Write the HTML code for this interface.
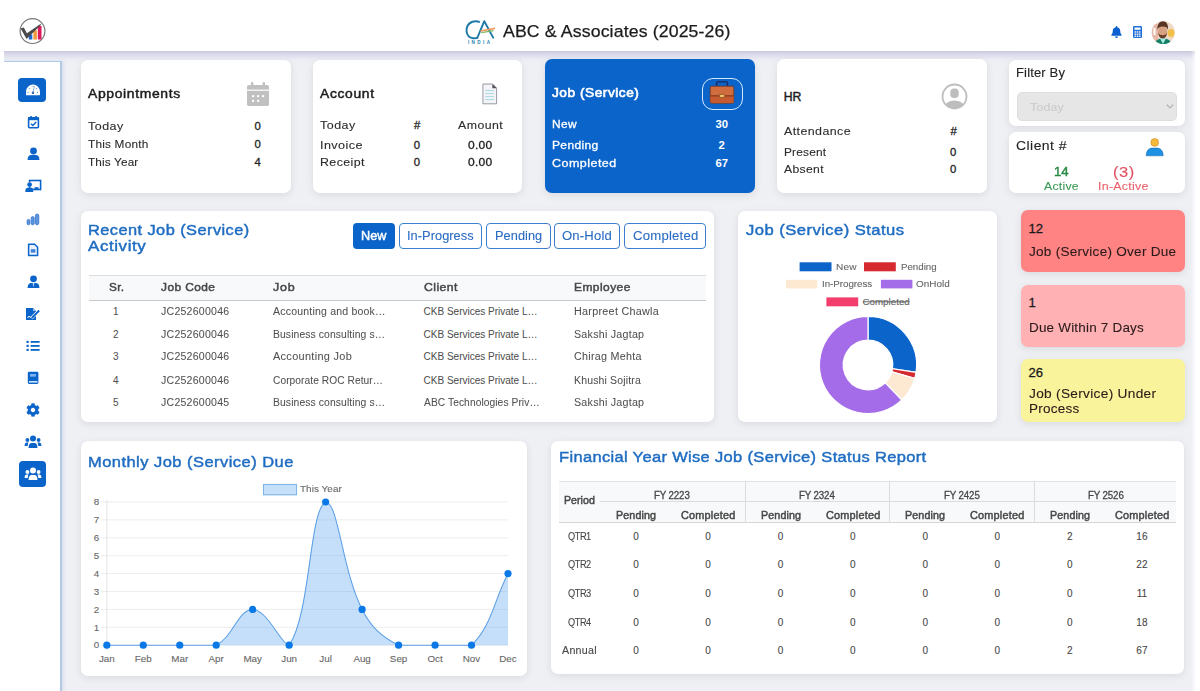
<!DOCTYPE html>
<html><head><meta charset="utf-8">
<style>
*{box-sizing:border-box;margin:0;padding:0}
html,body{width:1200px;height:691px;overflow:hidden;background:#fff;font-family:"Liberation Sans",sans-serif;color:#222}
.abs{position:absolute}
#main{position:absolute;left:61px;top:51px;width:1134px;height:640px;background:#eff0f4}
#hdr{position:absolute;left:0;top:0;width:1200px;height:51px;background:#fff}
#hshadow{position:absolute;left:4px;top:51px;width:1191px;height:11px;background:linear-gradient(#c9c8de,#dcdcec 35%,#ebecf4 75%,#eff0f4)}
#side{position:absolute;left:4px;top:61px;width:58px;height:630px;background:#fff;border-top:1.5px solid #b3cbea;border-right:2px solid #b2c8e4;box-shadow:2px 0 3px rgba(200,215,235,0.6)}
.card{position:absolute;background:#fff;border-radius:7px;box-shadow:0 2px 7px rgba(90,90,100,0.14)}
.t{position:absolute;white-space:nowrap;line-height:1;transform-origin:0 0}
#redge{position:absolute;left:1191px;top:51px;width:9px;height:640px;background:linear-gradient(90deg,rgba(255,255,255,0),#fff 70%)}

</style></head>
<body>
<div id="main"></div>
<div id="hdr"></div>
<div id="hshadow"></div>
<div id="side"></div>
<svg class="abs" style="left:17px;top:15px" width="32" height="32" viewBox="0 0 32 32">
  <circle cx="15.5" cy="16.1" r="12.4" fill="#fff" stroke="#777" stroke-width="1.2"/>
  <rect x="11.8" y="19.4" width="3.5" height="5.1" fill="#2467cc"/>
  <rect x="16.4" y="15.3" width="3.5" height="9.2" fill="#f59a3c"/>
  <rect x="20.8" y="10.9" width="3.7" height="13.6" fill="#dc1a5a"/>
  <path d="M3.6 13.6 L6.8 12.6 L9.9 18.2 L24.2 8.6 L23.6 10.2 L9.6 23.9 Z" fill="#4a4a4a"/>
</svg>
<svg class="abs" style="left:462px;top:17px" width="36" height="30" viewBox="462 17 36 30">
  <path d="M479.8 22.2 C477.5 21 474.5 20.8 471.8 22 C468 23.8 466.2 27.5 466.6 31.5 C467 35 469.5 37.6 473 38.2 C474.8 38.5 476.5 38.2 477.8 37.6" fill="none" stroke="#1f7aa8" stroke-width="2"/>
  <path d="M477 38.6 L484.3 21.2 L493.6 38.4" fill="none" stroke="#1f7aa8" stroke-width="1.9" stroke-linejoin="round"/>
  <path d="M480.5 31 L495 28.4" stroke="#f39a5c" stroke-width="1.6"/>
  <path d="M481.5 32.6 L493.5 30.6" stroke="#7dbb63" stroke-width="1.3"/>
  <text x="480.2" y="43.8" font-size="4.6" font-family="Liberation Sans" font-weight="bold" fill="#2a7fb0" text-anchor="middle" letter-spacing="2.4">INDIA</text>
</svg>
<svg class="abs" style="left:1111px;top:26px" width="11" height="12" viewBox="0 0 448 512"><path fill="#0b5fd0" d="M224 512c35 0 64-29 64-64H160c0 35 29 64 64 64zm215-150c-19-21-55-52-55-154 0-78-54-140-128-155V32c0-18-14-32-32-32s-32 14-32 32v21C118 68 64 130 64 208c0 102-36 133-55 154-6 6-9 14-9 22 0 16 13 32 32 32h384c19 0 32-16 32-32 0-8-3-16-9-22z"/></svg>
<svg class="abs" style="left:1133px;top:26px" width="9" height="12" viewBox="0 0 9 12"><rect x="0" y="0" width="9" height="12" rx="1.2" fill="#1f6fd8"/><rect x="1.5" y="1.5" width="6" height="2.3" fill="#fff"/><g fill="#fff"><rect x="1.5" y="5.3" width="1.6" height="1.3"/><rect x="3.7" y="5.3" width="1.6" height="1.3"/><rect x="5.9" y="5.3" width="1.6" height="1.3"/><rect x="1.5" y="7.5" width="1.6" height="1.3"/><rect x="3.7" y="7.5" width="1.6" height="1.3"/><rect x="5.9" y="7.5" width="1.6" height="1.3"/><rect x="1.5" y="9.6" width="1.6" height="1.3"/><rect x="3.7" y="9.6" width="1.6" height="1.3"/><rect x="5.9" y="9.6" width="1.6" height="1.3"/></g></svg>
<svg class="abs" style="left:1151px;top:20px" width="25" height="25" viewBox="0 0 25 25">
  <defs><clipPath id="av"><circle cx="12.3" cy="12.5" r="11.6"/></clipPath>
  <filter id="bl" x="-10%" y="-10%" width="120%" height="120%"><feGaussianBlur stdDeviation="0.45"/></filter></defs>
  <g clip-path="url(#av)"><g filter="url(#bl)">
    <rect width="25" height="25" fill="#efd9c8"/>
    <rect x="0" y="4" width="7" height="18" fill="#e7b7a8"/>
    <rect x="2.5" y="8" width="2" height="7" fill="#fff"/>
    <ellipse cx="20" cy="13" rx="3.5" ry="4" fill="#f0c04a"/>
    <path d="M3 25 C4 20 7.5 18.5 12 18.5 C16.5 18.5 20 20 21 25 Z" fill="#128066"/>
    <path d="M9 18.5 L12 24 L15 18.5 Z" fill="#a8ece6"/>
    <ellipse cx="11.6" cy="11.8" rx="4.6" ry="6" fill="#d6a283"/>
    <path d="M6.5 10 C6 4 8.5 1.2 11.8 1.2 C15.5 1.2 17.5 4 17 10 C16.2 7.2 14.5 6.5 11.8 6.5 C9.2 6.5 7.3 7.2 6.5 10 Z" fill="#5a3525"/>
    <path d="M7.2 12.5 C7.5 17 9.5 18.3 11.6 18.3 C13.8 18.3 15.8 17 16.1 12.5 C15.2 14.8 13.5 15.2 11.6 15.2 C9.8 15.2 8 14.8 7.2 12.5 Z" fill="#6a3b28"/>
  </g></g>
</svg>
<div class="abs" style="left:18px;top:78px;width:28px;height:24px;border-radius:4px;background:#0b64c9"></div>
<svg class="abs" style="left:25px;top:83px" width="16" height="13" viewBox="0 0 16 13">
 <path d="M1.6 12.2 C1.2 12.2 1 12 1 11.5 L1 8.6 A7 7 0 0 1 15 8.6 L15 11.5 C15 12 14.8 12.2 14.4 12.2 Z" fill="#fff"/>
 <g fill="#5a8fd6"><circle cx="4.3" cy="5.6" r="0.6"/><circle cx="3" cy="9.4" r="0.6"/><circle cx="12.5" cy="9.4" r="0.6"/><circle cx="11.4" cy="5.6" r="0.6"/><circle cx="8" cy="3.6" r="0.5"/></g>
 <circle cx="8" cy="9.8" r="1.2" fill="#1a4fa0"/>
 <path d="M8 9.8 L9.3 3.4" stroke="#7aa6e0" stroke-width="0.9"/>
</svg>
<svg class="abs" style="left:27px;top:115px" width="13" height="14" viewBox="0 0 13 14">
 <rect x="1.6" y="2.8" width="9.8" height="10" rx="1" fill="none" stroke="#0b64c9" stroke-width="1.6"/>
 <rect x="1" y="2.2" width="11" height="3" fill="#0b64c9"/>
 <rect x="3.2" y="1" width="1.6" height="2.5" fill="#0b64c9"/><rect x="8.2" y="1" width="1.6" height="2.5" fill="#0b64c9"/>
 <path d="M4 8.8 L5.8 10.5 L9.2 7" fill="none" stroke="#0b64c9" stroke-width="1.5"/>
</svg>
<svg class="abs" style="left:27px;top:147px" width="13" height="14" viewBox="0 0 13 14">
 <circle cx="6.5" cy="4" r="3.4" fill="#0b64c9"/>
 <path d="M0.6 13 C0.6 9 2.5 8 4.5 8 L8.5 8 C10.5 8 12.4 9 12.4 13 Z" fill="#0b64c9"/>
</svg>
<svg class="abs" style="left:25px;top:179px" width="17" height="14" viewBox="0 0 17 14">
 <rect x="4.6" y="1.5" width="11" height="9" fill="none" stroke="#0b64c9" stroke-width="1.6"/>
 <rect x="3" y="3" width="4" height="4.5" fill="#fff"/>
 <circle cx="4.6" cy="5.6" r="2.4" fill="#0b64c9"/>
 <path d="M0.3 13 C0.3 9.5 1.5 8.8 3 8.8 L6.5 8.8 C7.5 8.8 8.2 9.5 8.2 13 Z" fill="#0b64c9"/>
 <rect x="9.5" y="8.2" width="4" height="2.8" fill="#0b64c9"/>
</svg>
<svg class="abs" style="left:26px;top:213px" width="14" height="13" viewBox="0 0 14 13">
 <g fill="#5b93dc" stroke="#2b6ccc" stroke-width="0.7">
 <rect x="1.1" y="6.4" width="2.8" height="5.4" rx="1.4"/><rect x="5.2" y="3.6" width="3" height="8.2" rx="1.5"/>
 <rect x="9.4" y="1" width="3.4" height="10.8" rx="1.7"/></g>
</svg>
<svg class="abs" style="left:27px;top:243px" width="12" height="14" viewBox="0 0 12 14">
 <path d="M1.6 1.2 L7.6 1.2 L10.6 4.2 L10.6 12.6 L1.6 12.6 Z" fill="#eaf2ff" stroke="#0b64c9" stroke-width="1.5" stroke-linejoin="round"/>
 <rect x="3.8" y="6.2" width="4.6" height="3.4" fill="#3f7fd6"/>
</svg>
<svg class="abs" style="left:27px;top:275px" width="13" height="14" viewBox="0 0 13 14">
 <circle cx="6.5" cy="3.8" r="3.4" fill="#0b64c9"/>
 <path d="M0.6 13 C0.6 9 2.5 8 4.5 8 L8.5 8 C10.5 8 12.4 9 12.4 13 Z" fill="#0b64c9"/>
 <path d="M5.6 8 L6.5 12.5 L7.4 8 Z" fill="#bcd6ff"/>
</svg>
<svg class="abs" style="left:25px;top:307px" width="16" height="14" viewBox="0 0 16 14">
 <path d="M1 1 L8 1 L11 4 L11 13 L1 13 Z" fill="#0b64c9"/>
 <path d="M8 1 L8 4 L11 4" fill="#9cc2f2"/>
 <path d="M2.5 11 L4 9 L5 10.5 L6.5 9.5" fill="none" stroke="#fff" stroke-width="0.9"/>
 <path d="M6.5 11.2 L14.5 3.2" stroke="#fff" stroke-width="3.2"/>
 <path d="M6.8 11 L14.2 3.5" stroke="#0b64c9" stroke-width="1.8"/>
</svg>
<svg class="abs" style="left:26px;top:340px" width="14" height="12" viewBox="0 0 14 12">
 <g fill="#0b64c9"><rect x="0.5" y="0.8" width="2.2" height="2.2"/><rect x="0.5" y="4.8" width="2.2" height="2.2"/><rect x="0.5" y="8.8" width="2.2" height="2.2"/>
 <rect x="4.6" y="1" width="9" height="1.8"/><rect x="4.6" y="5" width="9" height="1.8"/><rect x="4.6" y="9" width="9" height="1.8"/></g>
</svg>
<svg class="abs" style="left:27px;top:371px" width="12" height="14" viewBox="0 0 12 14">
 <rect x="0.8" y="0.8" width="10.6" height="12.2" rx="1.4" fill="#0b64c9"/>
 <rect x="3" y="3" width="6" height="2.6" fill="#7fb2f5"/>
 <rect x="2" y="10" width="8.5" height="1.6" fill="#c8e6ff"/>
</svg>
<svg class="abs" style="left:26px;top:403px" width="14" height="14" viewBox="0 0 512 512">
 <path fill="#0b64c9" d="M487.4 315.7l-42.6-24.6c4.3-23.2 4.3-47 0-70.2l42.6-24.6c4.9-2.8 7.1-8.6 5.5-14-11.1-35.6-30-67.8-54.7-94.6-3.8-4.1-10-5.1-14.8-2.3L380.8 110c-17.9-15.4-38.5-27.3-60.8-35.1V25.8c0-5.6-3.9-10.5-9.4-11.7-36.7-8.2-74.3-7.8-109.2 0-5.5 1.2-9.4 6.1-9.4 11.7V75c-22.2 7.9-42.8 19.8-60.8 35.1L88.7 85.5c-4.9-2.8-11-1.9-14.8 2.3-24.7 26.7-43.6 58.9-54.7 94.6-1.7 5.4.6 11.2 5.5 14L67.3 221c-4.3 23.2-4.3 47 0 70.2l-42.6 24.6c-4.9 2.8-7.1 8.6-5.5 14 11.1 35.6 30 67.8 54.7 94.6 3.8 4.1 10 5.1 14.8 2.3l42.6-24.6c17.9 15.4 38.5 27.3 60.8 35.1v49.2c0 5.6 3.9 10.5 9.4 11.7 36.7 8.2 74.3 7.8 109.2 0 5.5-1.2 9.4-6.1 9.4-11.7v-49.2c22.2-7.9 42.8-19.8 60.8-35.1l42.6 24.6c4.9 2.8 11 1.9 14.8-2.3 24.7-26.7 43.6-58.9 54.7-94.6 1.5-5.5-.7-11.3-5.6-14.1zM256 336c-44.1 0-80-35.9-80-80s35.9-80 80-80 80 35.9 80 80-35.9 80-80 80z"/>
</svg>
<svg class="abs" style="left:24px;top:435px" width="18" height="14" viewBox="0 0 18 14">
 <g fill="#0b64c9"><circle cx="9" cy="3.6" r="3"/><circle cx="3.4" cy="5" r="1.9"/><circle cx="14.6" cy="5" r="1.9"/>
 <path d="M4.6 13 C4.6 9.2 6 8 8 8 L10 8 C12 8 13.4 9.2 13.4 13 Z"/>
 <path d="M0.6 11 C0.6 8.5 1.5 7.6 2.8 7.6 L4.5 7.6 C4 8.5 3.8 9.5 3.8 11 Z"/>
 <path d="M17.4 11 C17.4 8.5 16.5 7.6 15.2 7.6 L13.5 7.6 C14 8.5 14.2 9.5 14.2 11 Z"/></g>
</svg>
<div class="abs" style="left:19px;top:461px;width:27px;height:26px;border-radius:4px;background:#0b64c9"></div>
<svg class="abs" style="left:24px;top:467px" width="18" height="14" viewBox="0 0 18 14">
 <g fill="#fff"><circle cx="9" cy="3.6" r="3"/><circle cx="3.4" cy="5" r="1.9"/><circle cx="14.6" cy="5" r="1.9"/>
 <path d="M4.6 13 C4.6 9.2 6 8 8 8 L10 8 C12 8 13.4 9.2 13.4 13 Z"/>
 <path d="M0.6 11 C0.6 8.5 1.5 7.6 2.8 7.6 L4.5 7.6 C4 8.5 3.8 9.5 3.8 11 Z"/>
 <path d="M17.4 11 C17.4 8.5 16.5 7.6 15.2 7.6 L13.5 7.6 C14 8.5 14.2 9.5 14.2 11 Z"/></g>
</svg>
<div class="card" style="left:81px;top:60px;width:210px;height:133px"></div>
<div class="card" style="left:313px;top:60px;width:209px;height:133px"></div>
<div class="card" style="left:545px;top:59px;width:210px;height:134px;background:#0b64c9"></div>
<div class="card" style="left:777px;top:59px;width:210px;height:134px"></div>
<div class="card" style="left:1009px;top:60px;width:176px;height:66px"></div>
<div class="card" style="left:1009px;top:132px;width:176px;height:61px"></div>
<svg class="abs" style="left:246px;top:81px" width="24" height="26" viewBox="0 0 24 26">
 <rect x="1" y="4" width="22" height="21" rx="1.8" fill="#c0c0c0"/>
 <rect x="5" y="1" width="2.4" height="5" rx="1" fill="#c0c0c0"/><rect x="16.6" y="1" width="2.4" height="5" rx="1" fill="#c0c0c0"/>
 <rect x="1" y="8.6" width="22" height="1.2" fill="#fff"/>
 <g fill="#fff"><rect x="6" y="14.2" width="2.2" height="2"/><rect x="11" y="14.2" width="2.2" height="2"/><rect x="16" y="14.2" width="2.2" height="2"/>
 <rect x="6" y="18.8" width="2.2" height="2"/><rect x="11" y="18.8" width="2.2" height="2"/></g>
</svg>
<svg class="abs" style="left:482px;top:83px" width="16" height="22" viewBox="0 0 16 22">
 <path d="M0.9 1 L10.6 1 L14.6 5 L14.6 20.8 L0.9 20.8 Z" fill="#f3f4f8" stroke="#8e8e98" stroke-width="0.9"/>
 <path d="M10.4 0.9 L14.7 5.2 L10.4 5.2 Z" fill="#4d4d5a"/>
 <g stroke="#9fd6dc" stroke-width="0.9"><line x1="3.2" y1="7.6" x2="12" y2="7.6"/><line x1="3.2" y1="10.6" x2="12" y2="10.6"/><line x1="3.2" y1="13.6" x2="12" y2="13.6"/><line x1="3.2" y1="16.6" x2="12" y2="16.6"/></g>
</svg>
<div class="abs" style="left:702px;top:77.5px;width:40.5px;height:32.5px;border:1.3px solid #d2e8ff;border-radius:11px"></div>
<svg class="abs" style="left:709px;top:81px" width="26" height="23" viewBox="0 0 26 23">
 <path d="M7.6 5.5 L7.6 2.2 C7.6 1.3 8.2 0.8 9 0.8 L17 0.8 C17.8 0.8 18.4 1.3 18.4 2.2 L18.4 5.5" fill="none" stroke="#1b2f6a" stroke-width="1.5"/>
 <rect x="1.2" y="5.2" width="23.6" height="17" rx="1.6" fill="#cf6d3e" stroke="#7a3318" stroke-width="0.8"/>
 <rect x="1.6" y="15" width="22.8" height="6.8" fill="#c65a30"/>
 <rect x="1.6" y="14.2" width="22.8" height="1.3" fill="#8a3a1e"/>
 <rect x="10.3" y="13.4" width="5.4" height="3" rx="1" fill="#f3c36a" stroke="#6a3418" stroke-width="0.6"/>
</svg>
<svg class="abs" style="left:941px;top:83px" width="27" height="27" viewBox="0 0 27 27">
 <defs><clipPath id="hrc"><circle cx="13.5" cy="13.5" r="11.6"/></clipPath></defs>
 <circle cx="13.5" cy="13.5" r="12" fill="none" stroke="#bdbdbd" stroke-width="1.8"/>
 <g clip-path="url(#hrc)" fill="#bdbdbd"><rect x="9.3" y="5.5" width="8.4" height="9.5" rx="3.8"/><ellipse cx="13.5" cy="24" rx="10" ry="6.5"/></g>
</svg>
<div class="abs" style="left:1016.5px;top:92px;width:160.5px;height:28.8px;background:#e6e6e6;border:1px solid #dedede;border-radius:5px"></div>
<svg class="abs" style="left:1164.5px;top:103px" width="10" height="7" viewBox="0 0 10 7"><path d="M1.8 1.6 L5 4.8 L8.2 1.6" fill="none" stroke="#b0b0b0" stroke-width="1.2"/></svg>
<svg class="abs" style="left:1145px;top:137px" width="19" height="20" viewBox="0 0 19 20">
 <circle cx="9.7" cy="5.4" r="3.9" fill="#f7b93a" stroke="#c8892a" stroke-width="0.6"/>
 <path d="M1.2 18.8 C1.2 13.6 4 11.1 7.4 11.1 L12 11.1 C15.4 11.1 18.2 13.6 18.2 18.8 Z" fill="#1d92e2" stroke="#1a5fa8" stroke-width="0.5"/>
</svg>
<div class="card" style="left:81px;top:211px;width:633px;height:211px"></div>
<div class="card" style="left:738px;top:211px;width:259px;height:211px"></div>
<div class="card" style="left:1021px;top:210px;width:164px;height:62px;background:#ff8383"></div>
<div class="card" style="left:1021px;top:285px;width:164px;height:62px;background:#ffb1b4"></div>
<div class="card" style="left:1021px;top:359px;width:164px;height:63px;background:#f9f39c"></div>
<div class="abs" style="left:352.7px;top:223px;width:42.1px;height:26px;border-radius:4px;background:#0b64c9"></div>
<div class="abs" style="left:399.2px;top:223px;width:82.7px;height:26px;border-radius:4px;border:1px solid #3d7fcf;background:#fff"></div>
<div class="abs" style="left:486.3px;top:223px;width:64.3px;height:26px;border-radius:4px;border:1px solid #3d7fcf;background:#fff"></div>
<div class="abs" style="left:554.4px;top:223px;width:65.2px;height:26px;border-radius:4px;border:1px solid #3d7fcf;background:#fff"></div>
<div class="abs" style="left:624px;top:223px;width:82.4px;height:26px;border-radius:4px;border:1px solid #3d7fcf;background:#fff"></div>
<div class="abs" style="left:88.8px;top:275px;width:617.6px;height:26px;background:#f8f9fb;border-top:1px solid #dddddd;border-bottom:1px solid #c9c9c9"></div>
<svg class="abs" style="left:738px;top:250px" width="259" height="170" viewBox="738 250 259 170">
 <rect x="799.6" y="262.3" width="31.9" height="9" fill="#0b64c9"/>
 <rect x="864" y="262.3" width="31.8" height="9" fill="#d42a30"/>
 <rect x="786" y="279.8" width="31.2" height="8.6" fill="#fde9d1"/>
 <rect x="880.9" y="279.8" width="31.5" height="8.6" fill="#a56cea"/>
 <rect x="826.4" y="297.4" width="31.8" height="8.9" fill="#f23d6d"/>
 <line x1="863" y1="301.8" x2="909.5" y2="301.8" stroke="#666" stroke-width="1"/>
 <path d="M868.00 316.40 A48.6 48.6 0 0 1 916.04 372.35 L892.51 368.75 A24.8 24.8 0 0 0 868.00 340.20 Z" fill="#0b64c9" stroke="#fff" stroke-width="1.2"/><path d="M916.04 372.35 A48.6 48.6 0 0 1 914.72 378.40 L891.84 371.84 A24.8 24.8 0 0 0 892.51 368.75 Z" fill="#d42a30" stroke="#fff" stroke-width="1.2"/><path d="M914.72 378.40 A48.6 48.6 0 0 1 901.76 399.96 L885.23 382.84 A24.8 24.8 0 0 0 891.84 371.84 Z" fill="#fde9d1" stroke="#fff" stroke-width="1.2"/><path d="M901.76 399.96 A48.6 48.6 0 1 1 868.00 316.40 L868.00 340.20 A24.8 24.8 0 1 0 885.23 382.84 Z" fill="#a56cea" stroke="#fff" stroke-width="1.2"/>
</svg>
<div class="card" style="left:81px;top:441px;width:446px;height:235px"></div>
<div class="card" style="left:551px;top:441px;width:633px;height:233px"></div>
<svg class="abs" style="left:81px;top:441px" width="446" height="235" viewBox="81 441 446 235">
 <line x1="101" y1="645.20" x2="508" y2="645.20" stroke="#ededed" stroke-width="1"/><line x1="101" y1="627.30" x2="508" y2="627.30" stroke="#ededed" stroke-width="1"/><line x1="101" y1="609.40" x2="508" y2="609.40" stroke="#ededed" stroke-width="1"/><line x1="101" y1="591.50" x2="508" y2="591.50" stroke="#ededed" stroke-width="1"/><line x1="101" y1="573.60" x2="508" y2="573.60" stroke="#ededed" stroke-width="1"/><line x1="101" y1="555.70" x2="508" y2="555.70" stroke="#ededed" stroke-width="1"/><line x1="101" y1="537.80" x2="508" y2="537.80" stroke="#ededed" stroke-width="1"/><line x1="101" y1="519.90" x2="508" y2="519.90" stroke="#ededed" stroke-width="1"/><line x1="101" y1="502.00" x2="508" y2="502.00" stroke="#ededed" stroke-width="1"/>
 <line x1="106.8" y1="500" x2="106.8" y2="650" stroke="#e4e4e4" stroke-width="1"/>
 <rect x="263.5" y="484.5" width="33" height="10.3" fill="#c6e0fa" stroke="#7fb3ea" stroke-width="1.1"/>
 <path d="M106.80 645.20 C121.39 645.20 128.68 645.20 143.27 645.20 C157.86 645.20 165.16 645.20 179.75 645.20 C194.34 645.20 204.07 645.20 216.22 645.20 C233.25 636.84 238.10 609.40 252.69 609.40 C267.28 609.40 281.67 645.20 289.17 645.20 C310.85 613.28 309.13 510.10 325.64 502.00 C338.31 502.00 342.00 569.91 362.11 609.40 C371.17 627.19 381.56 636.84 398.58 645.20 C410.74 645.20 420.47 645.20 435.06 645.20 C449.65 645.20 462.42 645.20 471.53 645.20 C491.60 625.50 493.41 602.24 508.00 573.60 L508.00 645.2 L106.80 645.2 Z" fill="rgb(95,165,240)" fill-opacity="0.36"/>
 <path d="M106.80 645.20 C121.39 645.20 128.68 645.20 143.27 645.20 C157.86 645.20 165.16 645.20 179.75 645.20 C194.34 645.20 204.07 645.20 216.22 645.20 C233.25 636.84 238.10 609.40 252.69 609.40 C267.28 609.40 281.67 645.20 289.17 645.20 C310.85 613.28 309.13 510.10 325.64 502.00 C338.31 502.00 342.00 569.91 362.11 609.40 C371.17 627.19 381.56 636.84 398.58 645.20 C410.74 645.20 420.47 645.20 435.06 645.20 C449.65 645.20 462.42 645.20 471.53 645.20 C491.60 625.50 493.41 602.24 508.00 573.60" fill="none" stroke="#5b9fe6" stroke-width="1.05"/>
 <circle cx="106.80" cy="645.20" r="3.6" fill="#0a78e6"/><circle cx="143.27" cy="645.20" r="3.6" fill="#0a78e6"/><circle cx="179.75" cy="645.20" r="3.6" fill="#0a78e6"/><circle cx="216.22" cy="645.20" r="3.6" fill="#0a78e6"/><circle cx="252.69" cy="609.40" r="3.6" fill="#0a78e6"/><circle cx="289.17" cy="645.20" r="3.6" fill="#0a78e6"/><circle cx="325.64" cy="502.00" r="3.6" fill="#0a78e6"/><circle cx="362.11" cy="609.40" r="3.6" fill="#0a78e6"/><circle cx="398.58" cy="645.20" r="3.6" fill="#0a78e6"/><circle cx="435.06" cy="645.20" r="3.6" fill="#0a78e6"/><circle cx="471.53" cy="645.20" r="3.6" fill="#0a78e6"/><circle cx="508.00" cy="573.60" r="3.6" fill="#0a78e6"/>
</svg>
<div class="abs" style="left:559.2px;top:481px;width:617.2px;height:42px;background:#f8f9fb;border-top:1px solid #e2e2e2;border-bottom:1px solid #d6d6d6"></div>
<div class="abs" style="left:600px;top:501px;width:576.4px;height:1px;background:#dcdcdc"></div>
<div class="abs" style="left:744.6px;top:481px;width:1px;height:42px;background:#dcdcdc"></div>
<div class="abs" style="left:889.2px;top:481px;width:1px;height:42px;background:#dcdcdc"></div>
<div class="abs" style="left:1033.8px;top:481px;width:1px;height:42px;background:#dcdcdc"></div>
<div class="t" style="left:502.96px;top:22.93px;font-size:17.33px;color:#1b1b1b;letter-spacing:0.122px;transform:scaleX(1.0214);-webkit-text-stroke:0.25px currentColor">ABC &amp; Associates (2025-26)</div>
<div class="t" style="left:87.87px;top:88.47px;font-size:12.2px;color:#1d1d1d;letter-spacing:0.555px;transform:scaleX(1.1423);-webkit-text-stroke:0.45px currentColor">Appointments</div>
<div class="t" style="left:88.02px;top:121.20px;font-size:11.34px;color:#2b2b2b;letter-spacing:0.451px;transform:scaleX(1.1017);-webkit-text-stroke:0.1px currentColor">Today</div>
<div class="t" style="left:254.54px;top:121.20px;font-size:11.34px;color:#1d1d1d;-webkit-text-stroke:0.3px currentColor">0</div>
<div class="t" style="left:88.02px;top:139.10px;font-size:11.34px;color:#2b2b2b;letter-spacing:0.177px;transform:scaleX(1.0453);-webkit-text-stroke:0.1px currentColor">This Month</div>
<div class="t" style="left:254.54px;top:139.10px;font-size:11.34px;color:#1d1d1d;-webkit-text-stroke:0.3px currentColor">0</div>
<div class="t" style="left:88.02px;top:156.70px;font-size:11.34px;color:#2b2b2b;letter-spacing:0.143px;transform:scaleX(1.0385);-webkit-text-stroke:0.1px currentColor">This Year</div>
<div class="t" style="left:254.54px;top:156.70px;font-size:11.34px;color:#1d1d1d;-webkit-text-stroke:0.3px currentColor">4</div>
<div class="t" style="left:320.02px;top:87.87px;font-size:12.2px;color:#1d1d1d;letter-spacing:0.576px;transform:scaleX(1.1369);-webkit-text-stroke:0.45px currentColor">Account</div>
<div class="t" style="left:320.07px;top:119.65px;font-size:11.34px;color:#2b2b2b;letter-spacing:0.451px;transform:scaleX(1.1017);-webkit-text-stroke:0.1px currentColor">Today</div>
<div class="t" style="left:414.04px;top:119.65px;font-size:11.34px;color:#1d1d1d;-webkit-text-stroke:0.3px currentColor">#</div>
<div class="t" style="left:458.32px;top:119.65px;font-size:11.34px;color:#2b2b2b;letter-spacing:0.416px;transform:scaleX(1.0890);-webkit-text-stroke:0.1px currentColor">Amount</div>
<div class="t" style="left:320.07px;top:139.80px;font-size:11.34px;color:#2b2b2b;letter-spacing:0.390px;transform:scaleX(1.1114);-webkit-text-stroke:0.1px currentColor">Invoice</div>
<div class="t" style="left:413.84px;top:139.80px;font-size:11.34px;color:#1d1d1d;-webkit-text-stroke:0.3px currentColor">0</div>
<div class="t" style="left:468.47px;top:139.80px;font-size:11.34px;color:#1d1d1d;letter-spacing:0.270px;transform:scaleX(1.0608);-webkit-text-stroke:0.3px currentColor">0.00</div>
<div class="t" style="left:320.07px;top:157.30px;font-size:11.34px;color:#2b2b2b;letter-spacing:0.364px;transform:scaleX(1.0957);-webkit-text-stroke:0.1px currentColor">Receipt</div>
<div class="t" style="left:413.84px;top:157.30px;font-size:11.34px;color:#1d1d1d;-webkit-text-stroke:0.3px currentColor">0</div>
<div class="t" style="left:468.47px;top:157.30px;font-size:11.34px;color:#1d1d1d;letter-spacing:0.270px;transform:scaleX(1.0608);-webkit-text-stroke:0.3px currentColor">0.00</div>
<div class="t" style="left:551.67px;top:86.76px;font-size:12.1px;color:#ffffff;letter-spacing:0.457px;transform:scaleX(1.1325);-webkit-text-stroke:0.6px currentColor">Job (Service)</div>
<div class="t" style="left:551.72px;top:119.40px;font-size:11.34px;color:#ffffff;letter-spacing:0.349px;transform:scaleX(1.0506);-webkit-text-stroke:0.3px currentColor">New</div>
<div class="t" style="left:715.40px;top:119.40px;font-size:11.34px;color:#ffffff;font-weight:700">30</div>
<div class="t" style="left:551.72px;top:140.00px;font-size:11.34px;color:#ffffff;letter-spacing:0.283px;transform:scaleX(1.0668);-webkit-text-stroke:0.3px currentColor">Pending</div>
<div class="t" style="left:718.54px;top:140.00px;font-size:11.34px;color:#ffffff;font-weight:700">2</div>
<div class="t" style="left:551.72px;top:158.40px;font-size:11.34px;color:#ffffff;letter-spacing:0.422px;transform:scaleX(1.1037);-webkit-text-stroke:0.3px currentColor">Completed</div>
<div class="t" style="left:715.40px;top:158.40px;font-size:11.34px;color:#ffffff;font-weight:700">67</div>
<div class="t" style="left:783.67px;top:90.67px;font-size:12.2px;color:#1d1d1d;letter-spacing:-0.013px;-webkit-text-stroke:0.45px currentColor">HR</div>
<div class="t" style="left:783.72px;top:126.40px;font-size:11.34px;color:#2b2b2b;letter-spacing:0.372px;transform:scaleX(1.0976);-webkit-text-stroke:0.1px currentColor">Attendance</div>
<div class="t" style="left:950.44px;top:126.40px;font-size:11.34px;color:#1d1d1d;-webkit-text-stroke:0.3px currentColor">#</div>
<div class="t" style="left:783.72px;top:147.40px;font-size:11.34px;color:#2b2b2b;letter-spacing:0.195px;transform:scaleX(1.0481);-webkit-text-stroke:0.1px currentColor">Present</div>
<div class="t" style="left:950.04px;top:147.40px;font-size:11.34px;color:#1d1d1d;-webkit-text-stroke:0.3px currentColor">0</div>
<div class="t" style="left:783.72px;top:164.40px;font-size:11.34px;color:#2b2b2b;letter-spacing:0.315px;transform:scaleX(1.0738);-webkit-text-stroke:0.1px currentColor">Absent</div>
<div class="t" style="left:950.04px;top:164.40px;font-size:11.34px;color:#1d1d1d;-webkit-text-stroke:0.3px currentColor">0</div>
<div class="t" style="left:1015.84px;top:67.13px;font-size:12.6px;color:#222;letter-spacing:0.131px;transform:scaleX(1.0361);-webkit-text-stroke:0.1px currentColor">Filter By</div>
<div class="t" style="left:1030.29px;top:100.74px;font-size:11.77px;color:#c9c9c9;letter-spacing:0.223px;transform:scaleX(1.0460);-webkit-text-stroke:0.1px currentColor">Today</div>
<div class="t" style="left:1015.84px;top:140.13px;font-size:12.6px;color:#222;letter-spacing:0.396px;transform:scaleX(1.1109);-webkit-text-stroke:0.1px currentColor">Client #</div>
<div class="t" style="left:1054.42px;top:165.46px;font-size:13.4px;color:#2a8a45;letter-spacing:-0.136px;transform:scaleX(0.9855);-webkit-text-stroke:0.45px currentColor">14</div>
<div class="t" style="left:1044.26px;top:180.71px;font-size:11.56px;color:#3a9a55;letter-spacing:0.239px;transform:scaleX(1.0623);-webkit-text-stroke:0.1px currentColor">Active</div>
<div class="t" style="left:1112.84px;top:164.32px;font-size:14.98px;color:#e05060;letter-spacing:0.527px;transform:scaleX(1.1018);-webkit-text-stroke:0.1px currentColor">(3)</div>
<div class="t" style="left:1097.95px;top:180.71px;font-size:11.56px;color:#e8606a;letter-spacing:0.256px;transform:scaleX(1.0750);-webkit-text-stroke:0.1px currentColor">In-Active</div>
<div class="t" style="left:87.90px;top:222.10px;font-size:15.0px;color:#1f6dc2;letter-spacing:0.406px;transform:scaleX(1.0909);-webkit-text-stroke:0.45px currentColor">Recent Job (Service)</div>
<div class="t" style="left:87.90px;top:238.20px;font-size:15.0px;color:#1f6dc2;letter-spacing:0.510px;transform:scaleX(1.1306);-webkit-text-stroke:0.45px currentColor">Activity</div>
<div class="t" style="left:361.04px;top:229.61px;font-size:12.63px;color:#fff;letter-spacing:0.029px;transform:scaleX(1.0036);-webkit-text-stroke:0.45px currentColor">New</div>
<div class="t" style="left:407.24px;top:229.61px;font-size:12.63px;color:#2a6cc4;letter-spacing:0.053px;transform:scaleX(1.0126);-webkit-text-stroke:0.1px currentColor">In-Progress</div>
<div class="t" style="left:494.84px;top:229.61px;font-size:12.63px;color:#2a6cc4;letter-spacing:0.057px;transform:scaleX(1.0115);-webkit-text-stroke:0.1px currentColor">Pending</div>
<div class="t" style="left:562.08px;top:229.61px;font-size:12.63px;color:#2a6cc4;letter-spacing:0.180px;transform:scaleX(1.0364);-webkit-text-stroke:0.1px currentColor">On-Hold</div>
<div class="t" style="left:632.52px;top:229.61px;font-size:12.63px;color:#2a6cc4;letter-spacing:0.204px;transform:scaleX(1.0424);-webkit-text-stroke:0.1px currentColor">Completed</div>
<div class="t" style="left:108.75px;top:281.67px;font-size:10.9px;color:#474747;letter-spacing:0.305px;transform:scaleX(1.0792);-webkit-text-stroke:0.45px currentColor">Sr.</div>
<div class="t" style="left:161.35px;top:281.67px;font-size:10.9px;color:#474747;letter-spacing:0.378px;transform:scaleX(1.0950);-webkit-text-stroke:0.45px currentColor">Job Code</div>
<div class="t" style="left:273.35px;top:281.67px;font-size:10.9px;color:#474747;letter-spacing:0.701px;transform:scaleX(1.1441);-webkit-text-stroke:0.45px currentColor">Job</div>
<div class="t" style="left:423.55px;top:281.67px;font-size:10.9px;color:#474747;letter-spacing:0.394px;transform:scaleX(1.1230);-webkit-text-stroke:0.45px currentColor">Client</div>
<div class="t" style="left:573.65px;top:281.67px;font-size:10.9px;color:#474747;letter-spacing:0.407px;transform:scaleX(1.0988);-webkit-text-stroke:0.45px currentColor">Employee</div>
<div class="t" style="left:112.97px;top:307.04px;font-size:10.0px;color:#505050;-webkit-text-stroke:0.05px currentColor">1</div>
<div class="t" style="left:161.00px;top:307.04px;font-size:10.0px;color:#505050;letter-spacing:0.220px;transform:scaleX(1.0568);-webkit-text-stroke:0.05px currentColor">JC252600046</div>
<div class="t" style="left:273.40px;top:307.04px;font-size:10.0px;color:#505050;letter-spacing:0.182px;transform:scaleX(1.0532);-webkit-text-stroke:0.05px currentColor">Accounting and book…</div>
<div class="t" style="left:423.60px;top:307.04px;font-size:10.0px;color:#505050;-webkit-text-stroke:0.05px currentColor">CKB Services Private L…</div>
<div class="t" style="left:574.00px;top:307.04px;font-size:10.0px;color:#505050;letter-spacing:0.256px;transform:scaleX(1.0780);-webkit-text-stroke:0.05px currentColor">Harpreet Chawla</div>
<div class="t" style="left:112.97px;top:329.84px;font-size:10.0px;color:#505050;-webkit-text-stroke:0.05px currentColor">2</div>
<div class="t" style="left:161.00px;top:329.84px;font-size:10.0px;color:#505050;letter-spacing:0.220px;transform:scaleX(1.0568);-webkit-text-stroke:0.05px currentColor">JC252600046</div>
<div class="t" style="left:273.40px;top:329.84px;font-size:10.0px;color:#505050;letter-spacing:0.107px;transform:scaleX(1.0332);-webkit-text-stroke:0.05px currentColor">Business consulting s…</div>
<div class="t" style="left:423.60px;top:329.84px;font-size:10.0px;color:#505050;-webkit-text-stroke:0.05px currentColor">CKB Services Private L…</div>
<div class="t" style="left:574.00px;top:329.84px;font-size:10.0px;color:#505050;letter-spacing:0.224px;transform:scaleX(1.0694);-webkit-text-stroke:0.05px currentColor">Sakshi Jagtap</div>
<div class="t" style="left:112.97px;top:352.34px;font-size:10.0px;color:#505050;-webkit-text-stroke:0.05px currentColor">3</div>
<div class="t" style="left:161.00px;top:352.34px;font-size:10.0px;color:#505050;letter-spacing:0.220px;transform:scaleX(1.0568);-webkit-text-stroke:0.05px currentColor">JC252600046</div>
<div class="t" style="left:273.40px;top:352.34px;font-size:10.0px;color:#505050;letter-spacing:0.291px;transform:scaleX(1.0915);-webkit-text-stroke:0.05px currentColor">Accounting Job</div>
<div class="t" style="left:423.60px;top:352.34px;font-size:10.0px;color:#505050;-webkit-text-stroke:0.05px currentColor">CKB Services Private L…</div>
<div class="t" style="left:574.00px;top:352.34px;font-size:10.0px;color:#505050;letter-spacing:0.249px;transform:scaleX(1.0746);-webkit-text-stroke:0.05px currentColor">Chirag Mehta</div>
<div class="t" style="left:112.97px;top:375.54px;font-size:10.0px;color:#505050;-webkit-text-stroke:0.05px currentColor">4</div>
<div class="t" style="left:161.00px;top:375.54px;font-size:10.0px;color:#505050;letter-spacing:0.220px;transform:scaleX(1.0568);-webkit-text-stroke:0.05px currentColor">JC252600046</div>
<div class="t" style="left:273.40px;top:375.54px;font-size:10.0px;color:#505050;letter-spacing:0.066px;transform:scaleX(1.0181);-webkit-text-stroke:0.05px currentColor">Corporate ROC Retur…</div>
<div class="t" style="left:423.60px;top:375.54px;font-size:10.0px;color:#505050;-webkit-text-stroke:0.05px currentColor">CKB Services Private L…</div>
<div class="t" style="left:574.00px;top:375.54px;font-size:10.0px;color:#505050;letter-spacing:0.147px;transform:scaleX(1.0492);-webkit-text-stroke:0.05px currentColor">Khushi Sojitra</div>
<div class="t" style="left:112.97px;top:397.84px;font-size:10.0px;color:#505050;-webkit-text-stroke:0.05px currentColor">5</div>
<div class="t" style="left:161.00px;top:397.84px;font-size:10.0px;color:#505050;letter-spacing:0.220px;transform:scaleX(1.0568);-webkit-text-stroke:0.05px currentColor">JC252600045</div>
<div class="t" style="left:273.40px;top:397.84px;font-size:10.0px;color:#505050;letter-spacing:0.107px;transform:scaleX(1.0332);-webkit-text-stroke:0.05px currentColor">Business consulting s…</div>
<div class="t" style="left:423.60px;top:397.84px;font-size:10.0px;color:#505050;letter-spacing:0.076px;transform:scaleX(1.0220);-webkit-text-stroke:0.05px currentColor">ABC Technologies Priv…</div>
<div class="t" style="left:574.00px;top:397.84px;font-size:10.0px;color:#505050;letter-spacing:0.224px;transform:scaleX(1.0694);-webkit-text-stroke:0.05px currentColor">Sakshi Jagtap</div>
<div class="t" style="left:746.09px;top:222.13px;font-size:15.2px;color:#1f6dc2;letter-spacing:0.409px;transform:scaleX(1.0941);-webkit-text-stroke:0.45px currentColor">Job (Service) Status</div>
<div class="t" style="left:835.71px;top:262.00px;font-size:9.8px;color:#666666;letter-spacing:0.170px;transform:scaleX(1.0279);-webkit-text-stroke:0.1px currentColor">New</div>
<div class="t" style="left:900.61px;top:262.00px;font-size:9.8px;color:#666666;letter-spacing:-0.026px;transform:scaleX(0.9934);-webkit-text-stroke:0.1px currentColor">Pending</div>
<div class="t" style="left:822.01px;top:279.40px;font-size:9.8px;color:#666666;letter-spacing:-0.018px;transform:scaleX(0.9945);-webkit-text-stroke:0.1px currentColor">In-Progress</div>
<div class="t" style="left:916.41px;top:279.40px;font-size:9.8px;color:#666666;letter-spacing:0.045px;transform:scaleX(1.0105);-webkit-text-stroke:0.1px currentColor">OnHold</div>
<div class="t" style="left:862.41px;top:297.10px;font-size:9.8px;color:#666666;-webkit-text-stroke:0.1px currentColor">Completed</div>
<div class="t" style="left:1028.62px;top:222.15px;font-size:13.05px;color:#1a1a1a;-webkit-text-stroke:0.3px currentColor">12</div>
<div class="t" style="left:1028.63px;top:246.13px;font-size:12.84px;color:#2a1a1a;letter-spacing:0.234px;transform:scaleX(1.0586);-webkit-text-stroke:0.1px currentColor">Job (Service) Over Due</div>
<div class="t" style="left:1028.62px;top:296.25px;font-size:13.05px;color:#1a1a1a;-webkit-text-stroke:0.3px currentColor">1</div>
<div class="t" style="left:1028.63px;top:321.83px;font-size:12.84px;color:#2a1a1a;letter-spacing:0.203px;transform:scaleX(1.0484);-webkit-text-stroke:0.1px currentColor">Due Within 7 Days</div>
<div class="t" style="left:1028.62px;top:366.15px;font-size:13.05px;color:#1a1a1a;-webkit-text-stroke:0.3px currentColor">26</div>
<div class="t" style="left:1028.63px;top:388.13px;font-size:12.84px;color:#2a1a1a;letter-spacing:0.269px;transform:scaleX(1.0687);-webkit-text-stroke:0.1px currentColor">Job (Service) Under</div>
<div class="t" style="left:1028.63px;top:403.13px;font-size:12.84px;color:#2a1a1a;letter-spacing:0.252px;transform:scaleX(1.0527);-webkit-text-stroke:0.1px currentColor">Process</div>
<div class="t" style="left:87.90px;top:454.20px;font-size:15.0px;color:#1f6dc2;letter-spacing:0.432px;transform:scaleX(1.0973);-webkit-text-stroke:0.45px currentColor">Monthly Job (Service) Due</div>
<div class="t" style="left:299.71px;top:484.20px;font-size:9.8px;color:#666666;letter-spacing:0.046px;transform:scaleX(1.0138);-webkit-text-stroke:0.1px currentColor">This Year</div>
<div class="t" style="left:93.73px;top:640.40px;font-size:9.8px;color:#666666;-webkit-text-stroke:0.1px currentColor">0</div>
<div class="t" style="left:93.73px;top:622.50px;font-size:9.8px;color:#666666;-webkit-text-stroke:0.1px currentColor">1</div>
<div class="t" style="left:93.73px;top:604.60px;font-size:9.8px;color:#666666;-webkit-text-stroke:0.1px currentColor">2</div>
<div class="t" style="left:93.73px;top:586.70px;font-size:9.8px;color:#666666;-webkit-text-stroke:0.1px currentColor">3</div>
<div class="t" style="left:93.73px;top:568.80px;font-size:9.8px;color:#666666;-webkit-text-stroke:0.1px currentColor">4</div>
<div class="t" style="left:93.73px;top:550.90px;font-size:9.8px;color:#666666;-webkit-text-stroke:0.1px currentColor">5</div>
<div class="t" style="left:93.73px;top:533.00px;font-size:9.8px;color:#666666;-webkit-text-stroke:0.1px currentColor">6</div>
<div class="t" style="left:93.73px;top:515.10px;font-size:9.8px;color:#666666;-webkit-text-stroke:0.1px currentColor">7</div>
<div class="t" style="left:93.73px;top:497.20px;font-size:9.8px;color:#666666;-webkit-text-stroke:0.1px currentColor">8</div>
<div class="t" style="left:98.90px;top:654.00px;font-size:9.8px;color:#666666;-webkit-text-stroke:0.1px currentColor">Jan</div>
<div class="t" style="left:134.83px;top:654.00px;font-size:9.8px;color:#666666;-webkit-text-stroke:0.1px currentColor">Feb</div>
<div class="t" style="left:171.31px;top:654.00px;font-size:9.8px;color:#666666;-webkit-text-stroke:0.1px currentColor">Mar</div>
<div class="t" style="left:208.59px;top:654.00px;font-size:9.8px;color:#666666;-webkit-text-stroke:0.1px currentColor">Apr</div>
<div class="t" style="left:243.43px;top:654.00px;font-size:9.8px;color:#666666;-webkit-text-stroke:0.1px currentColor">May</div>
<div class="t" style="left:281.27px;top:654.00px;font-size:9.8px;color:#666666;-webkit-text-stroke:0.1px currentColor">Jun</div>
<div class="t" style="left:319.37px;top:654.00px;font-size:9.8px;color:#666666;-webkit-text-stroke:0.1px currentColor">Jul</div>
<div class="t" style="left:353.39px;top:654.00px;font-size:9.8px;color:#666666;-webkit-text-stroke:0.1px currentColor">Aug</div>
<div class="t" style="left:389.87px;top:654.00px;font-size:9.8px;color:#666666;-webkit-text-stroke:0.1px currentColor">Sep</div>
<div class="t" style="left:427.43px;top:654.00px;font-size:9.8px;color:#666666;-webkit-text-stroke:0.1px currentColor">Oct</div>
<div class="t" style="left:462.81px;top:654.00px;font-size:9.8px;color:#666666;-webkit-text-stroke:0.1px currentColor">Nov</div>
<div class="t" style="left:499.28px;top:654.00px;font-size:9.8px;color:#666666;-webkit-text-stroke:0.1px currentColor">Dec</div>
<div class="t" style="left:558.68px;top:448.96px;font-size:15.4px;color:#1f6dc2;letter-spacing:0.313px;transform:scaleX(1.0707);-webkit-text-stroke:0.45px currentColor">Financial Year Wise Job (Service) Status Report</div>
<div class="t" style="left:563.56px;top:495.03px;font-size:10.6px;color:#474747;letter-spacing:0.018px;transform:scaleX(1.0045);-webkit-text-stroke:0.45px currentColor">Period</div>
<div class="t" style="left:654.41px;top:490.84px;font-size:10px;color:#474747;letter-spacing:-0.125px;transform:scaleX(0.9703);-webkit-text-stroke:0.3px currentColor">FY 2223</div>
<div class="t" style="left:615.97px;top:510.50px;font-size:10.4px;color:#474747;letter-spacing:0.122px;transform:scaleX(1.0304);-webkit-text-stroke:0.45px currentColor">Pending</div>
<div class="t" style="left:680.96px;top:510.50px;font-size:10.4px;color:#474747;letter-spacing:0.190px;transform:scaleX(1.0483);-webkit-text-stroke:0.45px currentColor">Completed</div>
<div class="t" style="left:799.01px;top:490.84px;font-size:10px;color:#474747;letter-spacing:-0.125px;transform:scaleX(0.9703);-webkit-text-stroke:0.3px currentColor">FY 2324</div>
<div class="t" style="left:760.57px;top:510.50px;font-size:10.4px;color:#474747;letter-spacing:0.122px;transform:scaleX(1.0304);-webkit-text-stroke:0.45px currentColor">Pending</div>
<div class="t" style="left:825.56px;top:510.50px;font-size:10.4px;color:#474747;letter-spacing:0.190px;transform:scaleX(1.0483);-webkit-text-stroke:0.45px currentColor">Completed</div>
<div class="t" style="left:943.61px;top:490.84px;font-size:10px;color:#474747;letter-spacing:-0.125px;transform:scaleX(0.9703);-webkit-text-stroke:0.3px currentColor">FY 2425</div>
<div class="t" style="left:905.17px;top:510.50px;font-size:10.4px;color:#474747;letter-spacing:0.122px;transform:scaleX(1.0304);-webkit-text-stroke:0.45px currentColor">Pending</div>
<div class="t" style="left:970.16px;top:510.50px;font-size:10.4px;color:#474747;letter-spacing:0.190px;transform:scaleX(1.0483);-webkit-text-stroke:0.45px currentColor">Completed</div>
<div class="t" style="left:1088.21px;top:490.84px;font-size:10px;color:#474747;letter-spacing:-0.125px;transform:scaleX(0.9703);-webkit-text-stroke:0.3px currentColor">FY 2526</div>
<div class="t" style="left:1049.77px;top:510.50px;font-size:10.4px;color:#474747;letter-spacing:0.122px;transform:scaleX(1.0304);-webkit-text-stroke:0.45px currentColor">Pending</div>
<div class="t" style="left:1114.76px;top:510.50px;font-size:10.4px;color:#474747;letter-spacing:0.190px;transform:scaleX(1.0483);-webkit-text-stroke:0.45px currentColor">Completed</div>
<div class="t" style="left:567.68px;top:531.74px;font-size:10px;color:#474747;letter-spacing:-0.488px;transform:scaleX(0.9218);-webkit-text-stroke:0.1px currentColor">QTR1</div>
<div class="t" style="left:633.22px;top:531.74px;font-size:10px;color:#474747;-webkit-text-stroke:0.1px currentColor">0</div>
<div class="t" style="left:705.32px;top:531.74px;font-size:10px;color:#474747;-webkit-text-stroke:0.1px currentColor">0</div>
<div class="t" style="left:777.82px;top:531.74px;font-size:10px;color:#474747;-webkit-text-stroke:0.1px currentColor">0</div>
<div class="t" style="left:849.92px;top:531.74px;font-size:10px;color:#474747;-webkit-text-stroke:0.1px currentColor">0</div>
<div class="t" style="left:922.42px;top:531.74px;font-size:10px;color:#474747;-webkit-text-stroke:0.1px currentColor">0</div>
<div class="t" style="left:994.52px;top:531.74px;font-size:10px;color:#474747;-webkit-text-stroke:0.1px currentColor">0</div>
<div class="t" style="left:1067.02px;top:531.74px;font-size:10px;color:#474747;-webkit-text-stroke:0.1px currentColor">2</div>
<div class="t" style="left:1136.34px;top:531.74px;font-size:10px;color:#474747;-webkit-text-stroke:0.1px currentColor">16</div>
<div class="t" style="left:567.68px;top:560.24px;font-size:10px;color:#474747;letter-spacing:-0.488px;transform:scaleX(0.9218);-webkit-text-stroke:0.1px currentColor">QTR2</div>
<div class="t" style="left:633.22px;top:560.24px;font-size:10px;color:#474747;-webkit-text-stroke:0.1px currentColor">0</div>
<div class="t" style="left:705.32px;top:560.24px;font-size:10px;color:#474747;-webkit-text-stroke:0.1px currentColor">0</div>
<div class="t" style="left:777.82px;top:560.24px;font-size:10px;color:#474747;-webkit-text-stroke:0.1px currentColor">0</div>
<div class="t" style="left:849.92px;top:560.24px;font-size:10px;color:#474747;-webkit-text-stroke:0.1px currentColor">0</div>
<div class="t" style="left:922.42px;top:560.24px;font-size:10px;color:#474747;-webkit-text-stroke:0.1px currentColor">0</div>
<div class="t" style="left:994.52px;top:560.24px;font-size:10px;color:#474747;-webkit-text-stroke:0.1px currentColor">0</div>
<div class="t" style="left:1067.02px;top:560.24px;font-size:10px;color:#474747;-webkit-text-stroke:0.1px currentColor">0</div>
<div class="t" style="left:1136.34px;top:560.24px;font-size:10px;color:#474747;-webkit-text-stroke:0.1px currentColor">22</div>
<div class="t" style="left:567.68px;top:588.53px;font-size:10px;color:#474747;letter-spacing:-0.488px;transform:scaleX(0.9218);-webkit-text-stroke:0.1px currentColor">QTR3</div>
<div class="t" style="left:633.22px;top:588.53px;font-size:10px;color:#474747;-webkit-text-stroke:0.1px currentColor">0</div>
<div class="t" style="left:705.32px;top:588.53px;font-size:10px;color:#474747;-webkit-text-stroke:0.1px currentColor">0</div>
<div class="t" style="left:777.82px;top:588.53px;font-size:10px;color:#474747;-webkit-text-stroke:0.1px currentColor">0</div>
<div class="t" style="left:849.92px;top:588.53px;font-size:10px;color:#474747;-webkit-text-stroke:0.1px currentColor">0</div>
<div class="t" style="left:922.42px;top:588.53px;font-size:10px;color:#474747;-webkit-text-stroke:0.1px currentColor">0</div>
<div class="t" style="left:994.52px;top:588.53px;font-size:10px;color:#474747;-webkit-text-stroke:0.1px currentColor">0</div>
<div class="t" style="left:1067.02px;top:588.53px;font-size:10px;color:#474747;-webkit-text-stroke:0.1px currentColor">0</div>
<div class="t" style="left:1136.70px;top:588.53px;font-size:10px;color:#474747;-webkit-text-stroke:0.1px currentColor">11</div>
<div class="t" style="left:567.68px;top:617.83px;font-size:10px;color:#474747;letter-spacing:-0.488px;transform:scaleX(0.9218);-webkit-text-stroke:0.1px currentColor">QTR4</div>
<div class="t" style="left:633.22px;top:617.83px;font-size:10px;color:#474747;-webkit-text-stroke:0.1px currentColor">0</div>
<div class="t" style="left:705.32px;top:617.83px;font-size:10px;color:#474747;-webkit-text-stroke:0.1px currentColor">0</div>
<div class="t" style="left:777.82px;top:617.83px;font-size:10px;color:#474747;-webkit-text-stroke:0.1px currentColor">0</div>
<div class="t" style="left:849.92px;top:617.83px;font-size:10px;color:#474747;-webkit-text-stroke:0.1px currentColor">0</div>
<div class="t" style="left:922.42px;top:617.83px;font-size:10px;color:#474747;-webkit-text-stroke:0.1px currentColor">0</div>
<div class="t" style="left:994.52px;top:617.83px;font-size:10px;color:#474747;-webkit-text-stroke:0.1px currentColor">0</div>
<div class="t" style="left:1067.02px;top:617.83px;font-size:10px;color:#474747;-webkit-text-stroke:0.1px currentColor">0</div>
<div class="t" style="left:1136.34px;top:617.83px;font-size:10px;color:#474747;-webkit-text-stroke:0.1px currentColor">18</div>
<div class="t" style="left:561.97px;top:646.24px;font-size:10px;color:#474747;letter-spacing:0.259px;transform:scaleX(1.0684);-webkit-text-stroke:0.1px currentColor">Annual</div>
<div class="t" style="left:633.22px;top:646.24px;font-size:10px;color:#474747;-webkit-text-stroke:0.1px currentColor">0</div>
<div class="t" style="left:705.32px;top:646.24px;font-size:10px;color:#474747;-webkit-text-stroke:0.1px currentColor">0</div>
<div class="t" style="left:777.82px;top:646.24px;font-size:10px;color:#474747;-webkit-text-stroke:0.1px currentColor">0</div>
<div class="t" style="left:849.92px;top:646.24px;font-size:10px;color:#474747;-webkit-text-stroke:0.1px currentColor">0</div>
<div class="t" style="left:922.42px;top:646.24px;font-size:10px;color:#474747;-webkit-text-stroke:0.1px currentColor">0</div>
<div class="t" style="left:994.52px;top:646.24px;font-size:10px;color:#474747;-webkit-text-stroke:0.1px currentColor">0</div>
<div class="t" style="left:1067.02px;top:646.24px;font-size:10px;color:#474747;-webkit-text-stroke:0.1px currentColor">2</div>
<div class="t" style="left:1136.34px;top:646.24px;font-size:10px;color:#474747;-webkit-text-stroke:0.1px currentColor">67</div>
<div id="redge"></div>
</body></html>
